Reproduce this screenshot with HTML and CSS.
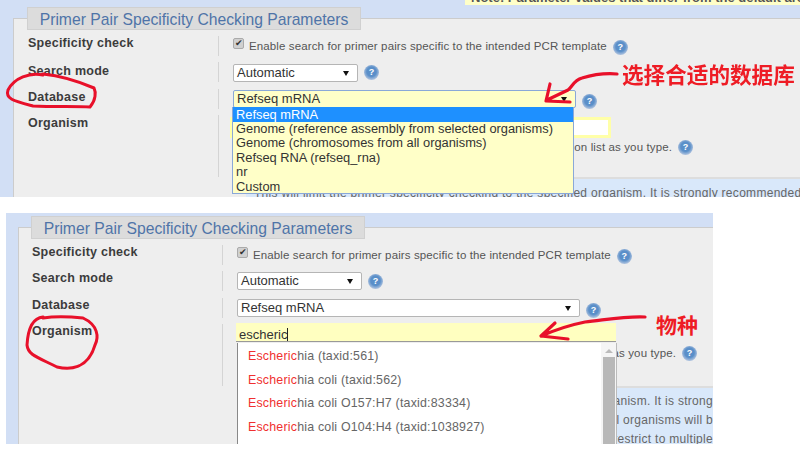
FILE: index.html
```html
<!DOCTYPE html>
<html lang="en">
<head>
<meta charset="utf-8">
<title>Primer Pair Specificity Checking Parameters</title>
<link rel="stylesheet" href="styles.css">
</head>
<body>
<div class="page">
  <section class="shot shot-a">
    <div class="note"><b>Note: Parameter values that differ from the default are highlighted</b></div>
    <div class="box">
      <h2 class="legend">Primer Pair Specificity Checking Parameters</h2>
      <div class="row">
        <label class="name">Specificity check</label>
        <div class="val"><span class="check">&#10004;</span><span class="txt">Enable search for primer pairs specific to the intended PCR template</span><i class="help">?</i></div>
      </div>
      <div class="row">
        <label class="name">Search mode</label>
        <div class="val"><span class="sel sel-s">Automatic<b class="caret"></b></span><i class="help">?</i></div>
      </div>
      <div class="row">
        <label class="name">Database</label>
        <div class="val"><span class="sel sel-l open">Refseq mRNA<b class="caret"></b></span><i class="help">?</i></div>
      </div>
      <div class="row row-org">
        <label class="name">Organism</label>
        <div class="val col">
          <span class="org-input"></span>
          <div class="hint"><span class="hint-t">Start typing in the text box, then select your organism from the suggestion list as you type.</span><i class="help">?</i></div>
        </div>
      </div>
      <div class="info">This will limit the primer specificity checking to the specified organism. It is strongly recommended</div>
    </div>
    <ul class="drop">
      <li class="on">Refseq mRNA</li>
      <li>Genome (reference assembly from selected organisms)</li>
      <li>Genome (chromosomes from all organisms)</li>
      <li>Refseq RNA (refseq_rna)</li>
      <li>nr</li>
      <li>Custom</li>
    </ul>
  </section>

  <section class="shot shot-b">
    <div class="box">
      <h2 class="legend">Primer Pair Specificity Checking Parameters</h2>
      <div class="row">
        <label class="name">Specificity check</label>
        <div class="val"><span class="check">&#10004;</span><span class="txt">Enable search for primer pairs specific to the intended PCR template</span><i class="help">?</i></div>
      </div>
      <div class="row">
        <label class="name">Search mode</label>
        <div class="val"><span class="sel sel-s">Automatic<b class="caret"></b></span><i class="help">?</i></div>
      </div>
      <div class="row">
        <label class="name">Database</label>
        <div class="val"><span class="sel sel-l">Refseq mRNA<b class="caret"></b></span><i class="help">?</i></div>
      </div>
      <div class="row row-org">
        <label class="name">Organism</label>
        <div class="val col">
          <span class="org-input typed">escheric</span>
          <div class="hint"><span class="hint-t">Start typing in the text box, then select your organism from the suggestion list as you type.</span><i class="help">?</i></div>
        </div>
      </div>
      <div class="info info-b">
        <p>This will limit the primer specificity checking to the specified organism. It is strong</p>
        <p>If no organism is specified, then all organisms will b</p>
        <p>Use the Add More Organisms button to restrict to multiple</p>
      </div>
    </div>
    <div class="auto">
      <ul class="auto-list">
        <li><em>Escheric</em>hia (taxid:561)</li>
        <li><em>Escheric</em>hia coli (taxid:562)</li>
        <li><em>Escheric</em>hia coli O157:H7 (taxid:83334)</li>
        <li><em>Escheric</em>hia coli O104:H4 (taxid:1038927)</li>
      </ul>
      <div class="bar"><span class="bar-up"></span><span class="bar-thumb"></span></div>
    </div>
  </section>

  <span class="mark mark-a">选择合适的数据库</span>
  <span class="mark mark-b">物种</span>
  <svg class="ink" viewBox="0 0 800 451" width="800" height="451" aria-hidden="true">
    <path d="M43 75C30 72 14 78 8 90C5 99 14 101 33 106C55 107 78 106 90 107C96 100 96 92 94 88C80 82 63 76 43 74"/>
    <path d="M43 317C33 318 28 328 27 345C28 355 37 357 57 367C70 370 88 369 95 345C99 337 98 325 83 318C65 316 55 316 43 318"/>
    <path class="thick" d="M617 74C605 73 592 75 582 78C574 80 572 87 568 90L547 100M550 84L546 101L570 102"/>
    <path class="thick" d="M645 317C625 316 605 320 585 322C570 325 555 330 541 336M555 323L541 336L568 339"/>
  </svg>
</div>
</body>
</html>
```
FILE: styles.css
```css
* { box-sizing: border-box; }
html, body { margin: 0; padding: 0; background: #fff; }
body { font-family: "Liberation Sans", Arial, sans-serif; color: #444; }
.page { position: relative; width: 800px; height: 451px; overflow: hidden; filter: blur(0.45px); }

.shot { position: relative; overflow: hidden; background: #d2dff5; }
.shot-a { width: 800px; height: 197px; padding: 18px 0 0 13px; }
.shot-b { width: 707px; height: 231px; margin: 16px 0 0 6px; padding: 14px 0 0 12px; }

.note { position: absolute; left: 465px; top: -9px; width: 335px; height: 14px; background: #ffffc8; font-size: 13px; line-height: 14px; white-space: nowrap; overflow: hidden; padding-left: 6px; color: #555; }

.box { position: relative; height: 300px; background: #eee; border: 1px solid #ccc; border-right: 0; padding-top: 17px; }
.legend { position: absolute; left: 13px; top: -12px; width: 334px; height: 23px; margin: 0; background: #dcdcdc; border: 1px solid #d0d0d0; color: #4f74a8; font-size: 15.7px; font-weight: 400; line-height: 23px; text-align: center; white-space: nowrap; }

.row { display: grid; grid-template-columns: 204px 1fr; height: 26.3px; }
.name { padding-left: 14px; font-size: 12.5px; line-height: 16px; font-weight: 700; color: #3c3c3c; letter-spacing: .25px; white-space: nowrap; }
.val { display: flex; align-items: flex-start; border-left: 1px solid #d4d4d4; height: 20px; padding-left: 14px; }
.col { flex-direction: column; height: 62px; }
.row-org { height: 63px; }

.shot-a .row:nth-child(2) .name { margin-top: -1px; }
.shot-a .row:nth-child(3) .name { margin-top: 1px; }
.shot-a .sel-s { margin-top: 2px; }

.shot-b .legend { left: 12px; }
.shot-b .row { grid-template-columns: 203px 1fr; }
.shot-b .name { padding-left: 13px; margin-top: -1px; }

.check { display: inline-block; width: 11px; height: 11px; margin: 2px 5px 0 0; background: #d0d0d0; border: 1px solid #aaa; border-radius: 2px; font-size: 9px; line-height: 9px; text-align: center; color: #333; }
.txt { font-size: 11.5px; letter-spacing: .12px; line-height: 16px; margin-top: 2px; white-space: nowrap; color: #555; }
.help { flex: none; display: inline-block; width: 15px; height: 15px; margin: 4px 0 0 6px; border-radius: 50%; background: radial-gradient(circle at 50% 45%, #5a8fc9 0 42%, #a4bcdc 68%, #ccd7e8 100%); color: #fff; font-size: 9px; font-style: normal; font-weight: 700; line-height: 15px; text-align: center; }

.sel { position: relative; display: block; height: 18px; background: #fff; border: 1px solid #b5b5b5; border-radius: 2px; padding-left: 3px; font-size: 13px; line-height: 16px; color: #333; }
.sel-s { width: 125px; margin-top: 1px; }
.sel-s + .help { margin: 3px 0 0 6px; }
.sel-l { width: 343px; margin-top: 1px; }
.sel-l + .help { margin: 5px 0 0 6px; }
.open { background: #ffffc8; border-color: #8aa8d8; }
.caret { position: absolute; right: 8px; top: 6px; width: 0; height: 0; border: 3px solid transparent; border-top: 5px solid #111; border-bottom: 0; }

.org-input { display: block; width: 381px; height: 21px; margin: 2px 0 0 -3px; background: #fff; border: 3px solid #ffffa8; font-size: 13px; line-height: 16px; }
.typed { width: 380px; height: 19px; margin: -1px 0 0 -1px; background: #ffffc0; border: 0; border-bottom: 1px solid #999; padding: 4px 0 0 3px; color: #333; overflow: hidden; }
.typed::after { content: ""; display: inline-block; width: 1px; height: 14px; background: #222; vertical-align: -3px; }

.hint { display: flex; justify-content: flex-end; width: 460px; margin-top: 0; overflow: hidden; }
.typed + .hint { margin-top: 2px; }
.hint-t { flex: none; font-size: 11.5px; letter-spacing: .12px; line-height: 16px; margin-top: 1px; white-space: nowrap; color: #555; }
.hint .help { margin-top: 2px; }

.info { margin: -1px 0 0 232px; height: 90px; background: #d9e8fa; border-top: 2px solid #ddd; padding: 7px 0 0 8px; font-size: 12px; letter-spacing: .29px; color: #666; white-space: nowrap; }
.info-b { display: flex; flex-direction: column; align-items: flex-end; gap: 3px; padding: 5px 0 0; overflow: hidden; }
.info-b p { margin: 0; line-height: 16px; }

.drop { position: absolute; left: 232px; top: 107px; width: 342px; height: 87px; margin: 0; padding: 0; list-style: none; background: #ffffc8; border: 1px solid #8aa8d8; border-top: 0; font-size: 12.85px; line-height: 14.4px; color: #333; }
.drop li { padding-left: 3px; white-space: nowrap; }
.drop .on { background: #1e90ff; color: #fff; height: 15px; line-height: 16px; }

.auto { position: absolute; left: 231px; top: 130px; width: 380px; height: 101px; display: flex; background: #fff; border-left: 1px solid #888; border-right: 1px solid #bbb; }
.auto-list { flex: 1; margin: 0; padding: 1px 0 0 10px; list-style: none; font-size: 12.4px; letter-spacing: .2px; color: #666; }
.auto-list li { height: 23.7px; line-height: 24px; white-space: nowrap; }
.auto-list em { font-style: normal; color: #f03030; }
.bar { flex: none; width: 15px; background: #f5f5f5; display: flex; flex-direction: column; align-items: center; }
.bar-up { width: 0; height: 0; margin: 6px 0 4px; border: 4px solid transparent; border-top: 0; border-bottom: 4px solid #bbb; }
.bar-thumb { width: 12px; flex: 1; background: #b8b8b8; }

.mark { position: absolute; color: #ee1c25; font-family: "Noto Sans CJK SC", sans-serif; font-weight: 700; white-space: nowrap; }
.mark-a { left: 622px; top: 58px; font-size: 21.6px; line-height: 31px; }
.mark-b { left: 656px; top: 309px; font-size: 21px; line-height: 31px; }

.ink { position: absolute; left: 0; top: 0; fill: none; stroke: #e8102a; stroke-width: 3px; stroke-linecap: round; stroke-linejoin: round; }
.ink .thick { stroke-width: 3.2px; }
```
